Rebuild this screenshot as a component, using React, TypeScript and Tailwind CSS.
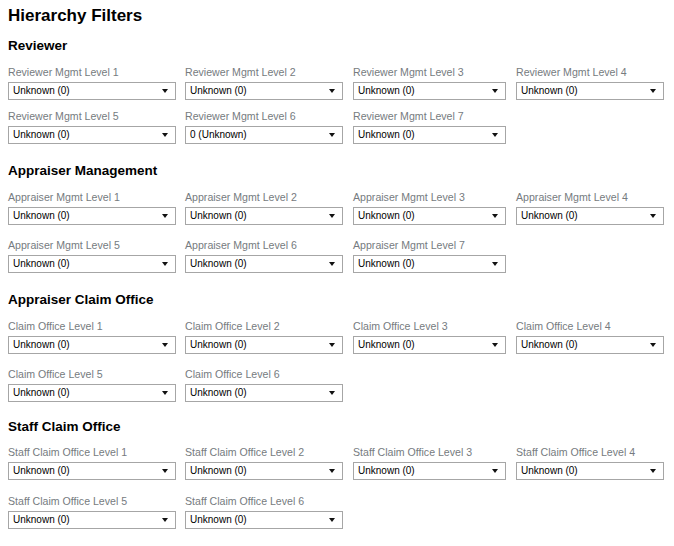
type FilterField = {
  label: string
  value: string
}

type FilterSection = {
  title: string
  top: string
  headGap: string
  rowGap: string
  rows: FilterField[][]
}

const colClasses = ["w-[168px]", "ml-[9px] w-[158px]", "ml-[10px] w-[153px]", "ml-[10px] w-[148px]"]

const unknown = "Unknown (0)"

const sections: FilterSection[] = [
  {
    title: "Reviewer",
    top: "mt-[10px]",
    headGap: "mb-[10px]",
    rowGap: "mt-[9px]",
    rows: [
      [
        { label: "Reviewer Mgmt Level 1", value: unknown },
        { label: "Reviewer Mgmt Level 2", value: unknown },
        { label: "Reviewer Mgmt Level 3", value: unknown },
        { label: "Reviewer Mgmt Level 4", value: unknown }
      ],
      [
        { label: "Reviewer Mgmt Level 5", value: unknown },
        { label: "Reviewer Mgmt Level 6", value: "0 (Unknown)" },
        { label: "Reviewer Mgmt Level 7", value: unknown }
      ]
    ]
  },
  {
    title: "Appraiser Management",
    top: "mt-[18px]",
    headGap: "mb-[10px]",
    rowGap: "mt-[13px]",
    rows: [
      [
        { label: "Appraiser Mgmt Level 1", value: unknown },
        { label: "Appraiser Mgmt Level 2", value: unknown },
        { label: "Appraiser Mgmt Level 3", value: unknown },
        { label: "Appraiser Mgmt Level 4", value: unknown }
      ],
      [
        { label: "Appraiser Mgmt Level 5", value: unknown },
        { label: "Appraiser Mgmt Level 6", value: unknown },
        { label: "Appraiser Mgmt Level 7", value: unknown }
      ]
    ]
  },
  {
    title: "Appraiser Claim Office",
    top: "mt-[18px]",
    headGap: "mb-[10px]",
    rowGap: "mt-[13px]",
    rows: [
      [
        { label: "Claim Office Level 1", value: unknown },
        { label: "Claim Office Level 2", value: unknown },
        { label: "Claim Office Level 3", value: unknown },
        { label: "Claim Office Level 4", value: unknown }
      ],
      [
        { label: "Claim Office Level 5", value: unknown },
        { label: "Claim Office Level 6", value: unknown }
      ]
    ]
  },
  {
    title: "Staff Claim Office",
    top: "mt-[16px]",
    headGap: "mb-[9px]",
    rowGap: "mt-[14px]",
    rows: [
      [
        { label: "Staff Claim Office Level 1", value: unknown },
        { label: "Staff Claim Office Level 2", value: unknown },
        { label: "Staff Claim Office Level 3", value: unknown },
        { label: "Staff Claim Office Level 4", value: unknown }
      ],
      [
        { label: "Staff Claim Office Level 5", value: unknown },
        { label: "Staff Claim Office Level 6", value: unknown }
      ]
    ]
  }
]

function FakeSelect({ value }: { value: string }) {
  return (
    <div className="mt-[3px] flex h-[18px] w-full items-center justify-between border border-[#a6a6a6] bg-white pl-[4px] pr-[7px]">
      <span className="text-[10px] leading-none text-black">{value}</span>
      <svg width="6" height="4" viewBox="0 0 6 4" className="shrink-0">
        <path d="M0 0H6L3 4Z" fill="#111" />
      </svg>
    </div>
  )
}

export default function App() {
  return (
    <div className="min-h-[546px] bg-white pl-[8px] pt-[5px] font-['Liberation_Sans',Arial,sans-serif]">
      <h1 className="text-[17px] font-bold leading-[22px] text-black">Hierarchy Filters</h1>

      {sections.map((section) => (
        <section key={section.title} className={section.top}>
          <h2 className={`${section.headGap} text-[13.5px] font-bold leading-[18px] text-black`}>
            {section.title}
          </h2>
          {section.rows.map((row, rIdx) => (
            <div key={rIdx} className={`flex ${rIdx > 0 ? section.rowGap : ""}`}>
              {row.map((field, cIdx) => (
                <div key={field.label} className={`flex flex-col ${colClasses[cIdx]}`}>
                  <span className="text-[10.6px] leading-[14px] text-[#767b80]">{field.label}</span>
                  <FakeSelect value={field.value} />
                </div>
              ))}
            </div>
          ))}
        </section>
      ))}
    </div>
  )
}
